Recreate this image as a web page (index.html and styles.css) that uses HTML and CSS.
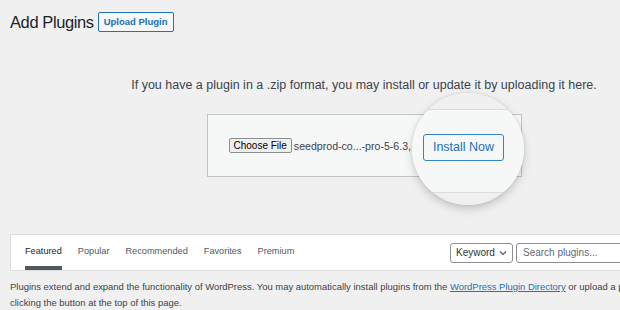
FILE: index.html
```html
<!DOCTYPE html>
<html lang="en">
<head>
    <meta charset="UTF-8">
    <meta name="viewport" content="width=device-width, initial-scale=1.0">
    <title>Add Plugins</title>
    <link rel="stylesheet" href="styles.css">
</head>
<body>
    <div class="wrap">
        <div class="page-title">
            <h1>Add Plugins</h1>
            <a class="title-btn" href="#">Upload Plugin</a>
        </div>

        <p class="install-help">If you have a plugin in a .zip format, you may install or update it by uploading it here.</p>

        <div class="upload-area">
            <form class="upload-form">
                <span class="file-btn">Choose File</span>
                <span class="file-name">seedprod-co...-pro-5-6.3,</span>
            </form>
            <div class="magnifier">
                <span class="submit-btn">Install Now</span>
            </div>
        </div>

        <div class="filter-bar">
            <ul class="filter-links">
                <li class="current">Featured</li>
                <li>Popular</li>
                <li>Recommended</li>
                <li>Favorites</li>
                <li>Premium</li>
            </ul>
            <div class="search-form">
                <span class="type-select">Keyword <svg width="8" height="6" viewBox="0 0 8 6"><path d="M1 1.5 L4 4.5 L7 1.5" fill="none" stroke="#50575e" stroke-width="1.1"/></svg></span>
                <span class="search-input">Search plugins...</span>
            </div>
        </div>

        <p class="intro">Plugins extend and expand the functionality of WordPress. You may automatically install plugins from the <a href="#">WordPress Plugin Directory</a> or upload a plugin in .zip format by clicking the button at the top of this page.</p>
    </div>
</body>
</html>
```

FILE: styles.css
```css
html, body {
    overflow: hidden;
}
body {
    margin: 0;
    background-color: #f0f0f1;
    font-family: "Liberation Sans", Arial, sans-serif;
    color: #3c434a;
}
.wrap {
    width: 708px;
    margin-left: 10px;
    padding-top: 12px;
}
.page-title {
    display: flex;
    align-items: center;
    gap: 4px;
    height: 20px;
}
h1 {
    margin: 0;
    font-size: 16.5px;
    font-weight: 400;
    color: #1d2327;
    letter-spacing: -0.4px;
}
.title-btn {
    display: inline-block;
    height: 18px;
    line-height: 18px;
    padding: 0 5px;
    border: 1px solid #2271b1;
    border-radius: 2px;
    background: #f6f7f7;
    color: #2271b1;
    font-size: 9.5px;
    font-weight: 700;
    text-decoration: none;
}
.install-help {
    margin: 44px 0 0;
    text-align: center;
    font-size: 12.5px;
    line-height: 18px;
}
.upload-area {
    position: relative;
    width: 315px;
    margin: 20px auto 0;
}
.upload-form {
    box-sizing: border-box;
    height: 63px;
    padding-left: 21px;
    display: flex;
    align-items: center;
    gap: 2px;
    background: #f6f7f7;
    border: 1px solid #c3c4c7;
    white-space: nowrap;
    font-size: 10px;
}
.file-btn {
    box-sizing: border-box;
    height: 15px;
    line-height: 13px;
    padding: 0 4px;
    border: 1px solid #8c8f94;
    border-radius: 2px;
    background: #efefef;
    color: #000;
    font-size: 10px;
}
.file-name {
    font-size: 10.6px;
    color: #3c434a;
}
.magnifier {
    position: absolute;
    left: 205px;
    top: -21px;
    width: 112px;
    height: 112px;
    border-radius: 50%;
    display: flex;
    align-items: center;
    justify-content: center;
    background: linear-gradient(#f0f0f1 0, #f0f0f1 16px, #dcdcde 16px, #dcdcde 17px, #f6f7f7 17px, #f6f7f7 99px, #dcdcde 99px, #dcdcde 100px, #f0f0f1 100px);
    box-shadow: 0 4px 10px rgba(0, 0, 0, 0.18), 0 0 3px rgba(0, 0, 0, 0.12);
}
.submit-btn {
    box-sizing: border-box;
    width: 81px;
    height: 27px;
    line-height: 25px;
    margin: 0 8px 4px 0;
    text-align: center;
    border: 1px solid #3582c4;
    border-radius: 3px;
    background: #f6f7f7;
    color: #2271b1;
    font-size: 12.5px;
}
.filter-bar {
    box-sizing: border-box;
    margin-top: 57px;
    height: 37px;
    padding: 0 0 0 14px;
    display: flex;
    justify-content: space-between;
    align-items: center;
    background: #fff;
    border: 1px solid #dcdcde;
}
.filter-links {
    display: flex;
    gap: 16px;
    height: 100%;
    margin: 0;
    padding: 0;
    list-style: none;
    font-size: 9.2px;
    color: #50575e;
}
.filter-links li {
    display: flex;
    align-items: center;
    box-sizing: border-box;
    height: 100%;
    padding-top: 1px;
    border-bottom: 4px solid transparent;
}
.filter-links .current {
    color: #1d2327;
    border-bottom-color: #50575e;
}
.search-form {
    display: flex;
    gap: 3px;
    width: 267px;
}
.type-select,
.search-input {
    box-sizing: border-box;
    height: 20px;
    display: flex;
    align-items: center;
    border: 1px solid #8c8f94;
    border-radius: 3px;
    background: #fff;
    font-size: 10px;
}
.type-select {
    width: 63px;
    padding: 0 5px;
    gap: 4px;
    color: #2c3338;
}
.search-input {
    flex: 1;
    padding: 0 6px;
    color: #646970;
}
.intro {
    margin: 8px 0 0;
    font-size: 9.45px;
    line-height: 15.5px;
    width: 730px;
}
.intro a {
    color: #2271b1;
}
```
